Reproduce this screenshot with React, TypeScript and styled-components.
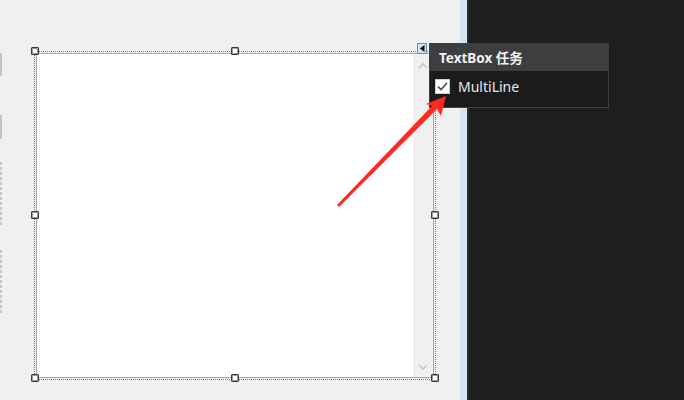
import React from "react";
import styled, { createGlobalStyle } from "styled-components";

const Global = createGlobalStyle`
  html, body { margin: 0; padding: 0; background: #f0f0f0; }
  body { font-family: "Noto Sans", "Noto Sans CJK SC", sans-serif; }
`;

const Screen = styled.div`
  position: relative;
  width: 684px;
  height: 400px;
  display: flex;
  overflow: hidden;
`;

const Canvas = styled.div`
  position: relative;
  width: 460px;
  flex: none;
  background: #f0f0f0;
  display: flex;
  padding: 51px 0 0 0;
  box-sizing: border-box;
`;

const Ruler = styled.div`
  width: 2px;
  flex: none;
  display: flex;
  flex-direction: column;
  padding-top: 2px;
`;

const Mark = styled.div<{ $h: number; $gap: number; $dashed?: boolean }>`
  width: 2px;
  height: ${(p) => p.$h}px;
  margin-bottom: ${(p) => p.$gap}px;
  background: ${(p) =>
    p.$dashed
      ? "repeating-linear-gradient(to bottom, #c4c4c4 0 3px, transparent 3px 5px)"
      : "#c4c4c4"};
`;

const Frame = styled.div`
  position: relative;
  margin-left: 32px;
  width: 402px;
  height: 329px;
  box-sizing: border-box;
  border: 1px dotted #7a7a7a;
  padding: 1px;
`;

const TextBox = styled.div`
  width: 100%;
  height: 100%;
  box-sizing: border-box;
  border: 1px solid #a6a6a6;
  background: #ffffff;
  display: flex;
`;

const TextArea = styled.div`
  flex: 1;
`;

const ScrollBar = styled.div`
  width: 20px;
  flex: none;
  background: #f0f0f0;
  display: flex;
  flex-direction: column;
  justify-content: space-between;
  align-items: center;
  padding: 8px 0 6px;
`;

const Handle = styled.div<{ $x: string; $y: string }>`
  position: absolute;
  left: ${(p) => p.$x};
  top: ${(p) => p.$y};
  width: 8px;
  height: 8px;
  margin: -5px 0 0 -4px;
  box-sizing: border-box;
  background: #fff;
  border: 1px solid #3a3a3a;
  border-radius: 1px;
  box-shadow: inset 0 0 0 1px #9a9a9a;
`;

const SmartTag = styled.div`
  position: absolute;
  left: 417px;
  top: 43px;
  width: 10px;
  height: 11px;
  box-sizing: border-box;
  background: #cfe0f2;
  border: 1px solid #6f8db0;
  display: flex;
  align-items: center;
  justify-content: center;
`;

const BlueStrip = styled.div`
  width: 7px;
  flex: none;
  background: #d7e4f2;
`;

const Divider = styled.div`
  width: 2px;
  flex: none;
  background: #2d2d30;
`;

const DarkPane = styled.div`
  flex: 1;
  background: #1e1e1e;
`;

const Popup = styled.div`
  position: absolute;
  left: 429px;
  top: 43px;
  width: 180px;
  height: 65px;
  box-sizing: border-box;
  border: 1px solid #3f3f46;
  background: #1b1b1c;
  display: flex;
  flex-direction: column;
`;

const PopupHeader = styled.div`
  height: 27px;
  flex: none;
  background: #3e3e40;
  color: #f1f1f1;
  font-weight: 700;
  font-size: 13.5px;
  display: flex;
  align-items: center;
  padding-left: 9px;
  padding-bottom: 2px;
  box-sizing: border-box;
`;

const PopupRow = styled.div`
  flex: 1;
  display: flex;
  align-items: center;
  padding-left: 5px;
  padding-bottom: 5px;
  gap: 8px;
  color: #e8e8f0;
  font-size: 14px;
`;

const CheckBox = styled.div`
  width: 15px;
  height: 15px;
  box-sizing: border-box;
  background: #ffffff;
  border: 1px solid #d0d0d0;
  display: flex;
  align-items: center;
  justify-content: center;
`;

const ArrowSvg = styled.svg`
  position: absolute;
  left: 0;
  top: 0;
  pointer-events: none;
`;

const Chevron = ({ up }: { up?: boolean }) => (
  <svg width="10" height="7" viewBox="0 0 10 7">
    <path
      d={up ? "M1 6 L5 2 L9 6" : "M1 1 L5 5 L9 1"}
      fill="none"
      stroke="#c6c6c6"
      strokeWidth="1.6"
    />
  </svg>
);

export default function App() {
  const handles: [string, string][] = [
    ["0px", "0px"],
    ["50%", "0px"],
    ["100%", "0px"],
    ["0px", "50%"],
    ["100%", "50%"],
    ["0px", "100%"],
    ["50%", "100%"],
    ["100%", "100%"],
  ];
  return (
    <Screen>
      <Global />
      <Canvas>
        <Ruler>
          <Mark $h={23} $gap={39} />
          <Mark $h={24} $gap={23} />
          <Mark $h={65} $gap={23} $dashed />
          <Mark $h={65} $gap={0} $dashed />
        </Ruler>
        <Frame>
          <TextBox>
            <TextArea />
            <ScrollBar>
              <Chevron up />
              <Chevron />
            </ScrollBar>
          </TextBox>
          {handles.map(([x, y], i) => (
            <Handle key={i} $x={x} $y={y} />
          ))}
        </Frame>
        <SmartTag>
          <svg width="5" height="7" viewBox="0 0 5 7">
            <path d="M4.5 0 L0 3.5 L4.5 7 Z" fill="#000" />
          </svg>
        </SmartTag>
      </Canvas>
      <BlueStrip />
      <Divider />
      <DarkPane />
      <Popup>
        <PopupHeader>TextBox 任务</PopupHeader>
        <PopupRow>
          <CheckBox>
            <svg width="11" height="9" viewBox="0 0 11 9">
              <path d="M1 4.5 L4 7.5 L10 1" fill="none" stroke="#4a4a4a" strokeWidth="1.6" />
            </svg>
          </CheckBox>
          <span>MultiLine</span>
        </PopupRow>
      </Popup>
      <ArrowSvg width="684" height="400" viewBox="0 0 684 400">
        <polygon
          points="446,96 441,116 437,109 339,207 337,205 432,106 426,104"
          fill="#ff2a1f"
        />
      </ArrowSvg>
    </Screen>
  );
}
